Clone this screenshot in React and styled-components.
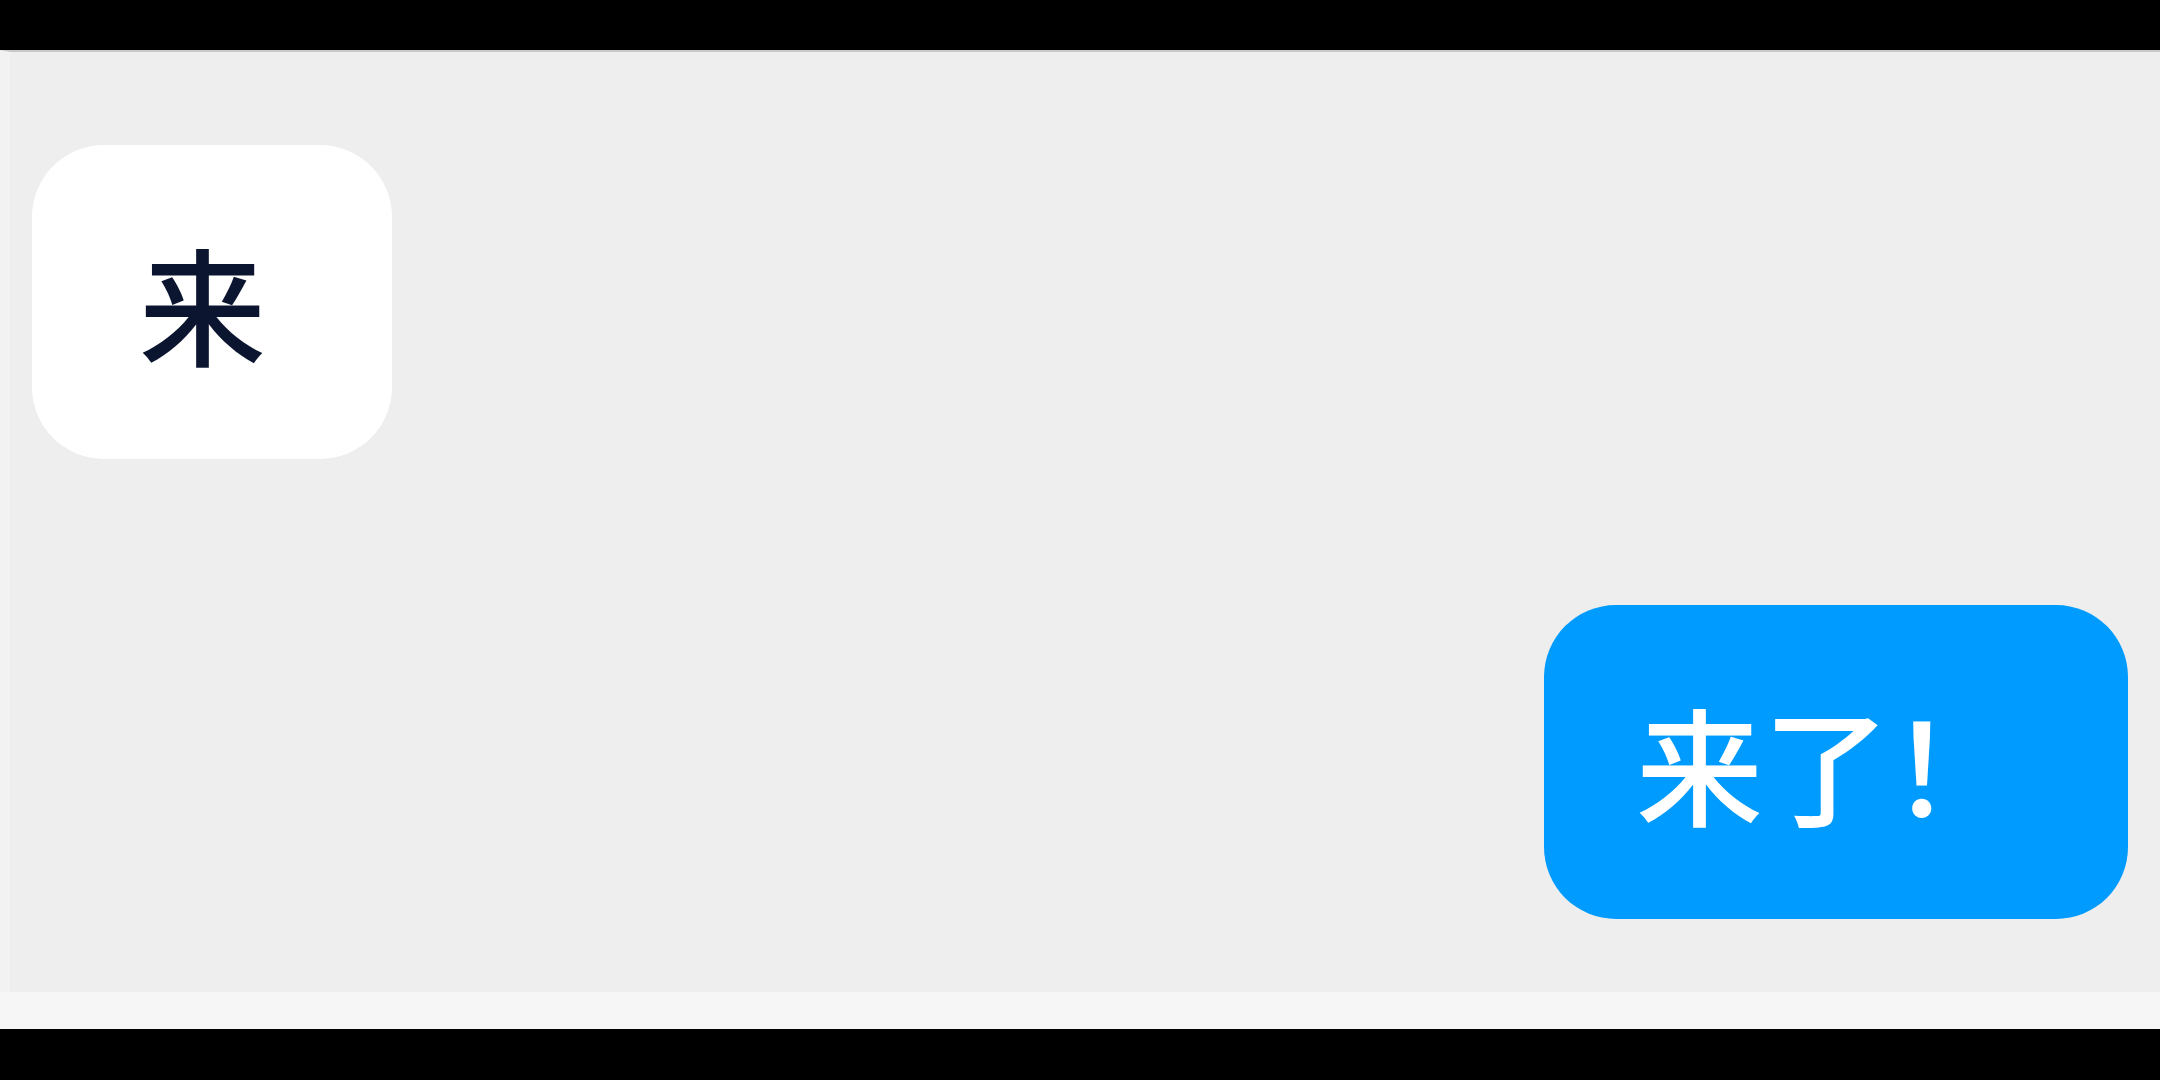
import React from "react";
import styled, { createGlobalStyle } from "styled-components";

const GlobalStyle = createGlobalStyle`
  html, body {
    margin: 0;
    padding: 0;
    background: #000000;
  }

  body {
    font-family: "Noto Sans CJK SC", "Noto Sans", sans-serif;
  }
`;

const messages = [
  { id: 1, text: "来", mine: false, pad: "0 126px 0 107px" },
  { id: 2, text: "来了！", mine: true, pad: "0 111px 0 92px" },
];

function App() {
  return (
    <>
      <GlobalStyle />
      <Screen>
        <TopBar />
        <Chat>
          {messages.map((m) => (
            <Row key={m.id} $mine={m.mine}>
              <Bubble $mine={m.mine} $pad={m.pad}>
                {m.text}
              </Bubble>
            </Row>
          ))}
        </Chat>
        <Composer />
        <BottomBar />
      </Screen>
    </>
  );
}

export default App;

const Screen = styled.div`
  display: flex;
  flex-direction: column;
  width: 2160px;
  height: 1080px;
  overflow: hidden;
`;

const TopBar = styled.div`
  height: 50px;
  background: #000000;
  flex-shrink: 0;
`;

const Chat = styled.div`
  flex: 1;
  display: flex;
  flex-direction: column;
  gap: 146px;
  padding: 93px 32px 0 22px;
  background: #eeeeee;
  border-top: 2px solid #c9c9c9;
  border-left: 10px solid #f2f2f2;
`;

const Row = styled.div`
  display: flex;
  justify-content: ${(p) => (p.$mine ? "flex-end" : "flex-start")};
`;

const Bubble = styled.div`
  display: flex;
  align-items: center;
  height: 314px;
  padding: ${(p) => p.$pad};
  border-radius: 72px;
  font-size: 127px;
  font-weight: 500;
  line-height: 1;
  white-space: nowrap;
  background: ${(p) => (p.$mine ? "#009bff" : "#ffffff")};
  color: ${(p) => (p.$mine ? "#ffffff" : "#0b1530")};
`;

const Composer = styled.div`
  height: 37px;
  background: #f6f6f6;
  flex-shrink: 0;
`;

const BottomBar = styled.div`
  height: 51px;
  background: #000000;
  flex-shrink: 0;
`;
